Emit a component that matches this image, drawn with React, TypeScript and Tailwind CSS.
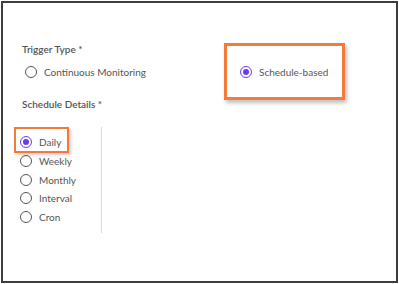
import React from 'react';

function Radio({ checked }: { checked?: boolean }) {
  if (checked) {
    return (
      <span className="flex h-[12px] w-[12px] shrink-0 items-center justify-center rounded-full border-[1.5px] border-[#6a3de8]">
        <span className="h-[6px] w-[6px] rounded-full bg-[#6a3de8]" />
      </span>
    );
  }
  return <span className="h-[12px] w-[12px] shrink-0 rounded-full border-[1.5px] border-[#555]" />;
}

function Option({ label, checked, className = '' }: { label: string; checked?: boolean; className?: string }) {
  return (
    <label className={`flex items-center gap-[7px] text-[10px] leading-[14px] text-[#555] ${className}`}>
      <Radio checked={checked} />
      <span>{label}</span>
    </label>
  );
}

export default function App() {
  const frequencies = ['Daily', 'Weekly', 'Monthly', 'Interval', 'Cron'];

  return (
    <div className="h-[284px] w-[399px] bg-white p-px" style={{ fontFamily: 'Lato, "Open Sans", sans-serif' }}>
      <div className="h-[282px] w-[397px] border-2 border-[#3d3d3d] pl-[19px] pt-[39px]">
        <p className="text-[10px] font-semibold leading-[14px] text-[#555]">Trigger Type *</p>

        {/* Trigger type options */}
        <div className="mt-[9px] flex items-center">
          <div className="w-[218px]">
            <Option label="Continuous Monitoring" className="ml-[3px]" />
          </div>
          <div className="relative">
            <div className="pointer-events-none absolute -left-[16px] -top-[22px] h-[57px] w-[121px] border-[3px] border-[#f47a3a] shadow-[2px_3px_4px_rgba(0,0,0,0.25)]" />
            <Option label="Schedule-based" checked />
          </div>
        </div>

        <p className="mt-[18px] text-[10px] font-semibold leading-[14px] text-[#555]">Schedule Details *</p>

        {/* Schedule frequency */}
        <div className="mt-[16px] flex h-[106px]">
          <div className="w-[79px] pt-[6px]">
            {frequencies.map((f, i) => (
              <div key={f} className="relative -ml-[2px] flex h-[18.7px] items-center">
                {i === 0 && (
                  <div className="pointer-events-none absolute -left-[6px] -top-[6px] h-[26px] w-[55px] border-2 border-[#f47a3a] shadow-[2px_2px_3px_rgba(0,0,0,0.2)]" />
                )}
                <Option label={f} checked={i === 0} />
              </div>
            ))}
          </div>
          <div className="w-px bg-[#dcdcdc]" />
        </div>
      </div>
    </div>
  );
}
